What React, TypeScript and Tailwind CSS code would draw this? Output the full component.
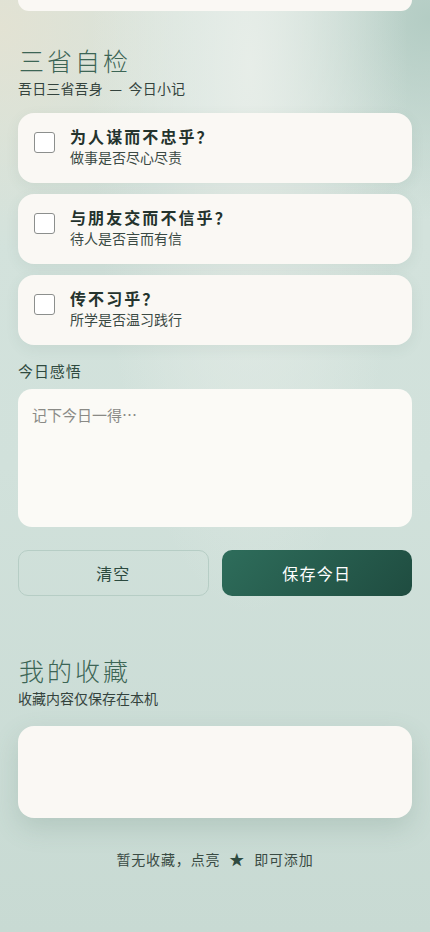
import React from 'react';

const font = { fontFamily: '"Noto Sans CJK SC", "Noto Sans", sans-serif' };

const questions = [
	{ title: '为人谋而不忠乎？', desc: '做事是否尽心尽责' },
	{ title: '与朋友交而不信乎？', desc: '待人是否言而有信' },
	{ title: '传不习乎？', desc: '所学是否温习践行' },
];

function QuestionCard({ title, desc }: { title: string; desc: string }) {
	return (
		<label className="flex items-start gap-[15px] h-[70px] rounded-2xl bg-[#faf8f4] px-4 pt-[12px] shadow-[0_4px_14px_rgba(60,100,85,0.08)]">
			<span className="mt-[7px] w-[21px] h-[21px] shrink-0 rounded-[3px] border-[1.5px] border-[#8c8f8d] bg-white" />
			<div className="flex flex-col">
				<span className="text-[16px] leading-[22px] font-bold tracking-[0.13em] text-[#24332d]">{title}</span>
				<span className="text-[14px] leading-[20px] text-[#3b4a44]">{desc}</span>
			</div>
		</label>
	);
}

export default function App() {
	return (
		<div
			style={font}
			className="min-h-[932px] w-full bg-[radial-gradient(ellipse_at_58%_7%,rgba(232,238,233,0.95),transparent_45%),radial-gradient(circle_at_0%_3%,rgba(228,226,210,0.9),transparent_22%),radial-gradient(circle_at_100%_2%,rgba(176,202,193,0.9),transparent_20%),linear-gradient(180deg,#d5e3dd_0%,#d1e1db_50%,#c8dad3_100%)] px-[18px] pb-10"
		>
			<div className="h-[11px] rounded-b-2xl bg-[#faf8f4]" />

			<section className="mt-[34px]">
				<h2 className="text-[25px] leading-[30px] font-light tracking-[0.12em] text-[#3c6555] pl-px">三省自检</h2>
				<p className="mt-[3px] text-[14px] leading-[20px] tracking-[0.01em] text-[#34433d]">吾日三省吾身 &nbsp;—&nbsp; 今日小记</p>

				<div className="mt-[15px] flex flex-col gap-[11px]">
					{questions.map((q) => (
						<QuestionCard key={q.title} title={q.title} desc={q.desc} />
					))}
				</div>

				<p className="mt-[15px] text-[15px] leading-[22px] tracking-[0.06em] text-[#2f4a40]">今日感悟</p>
				<textarea
					placeholder="记下今日一得…"
					className="mt-[7px] block w-full h-[138px] resize-none rounded-[14px] bg-[#fbfaf6] px-[14px] py-[15px] text-[15px] leading-[22px] text-[#2f3d37] placeholder:text-[#8a8a86] outline-none"
				/>

				<div className="mt-[23px] grid grid-cols-2 gap-[13px]">
					<button className="h-[46px] rounded-[10px] border border-[#b6cdc5] bg-transparent text-[16px] tracking-[0.06em] text-[#2c4a3f]">
						清空
					</button>
					<button className="h-[46px] rounded-[10px] bg-[linear-gradient(135deg,#2e6d5b,#1f4c40)] text-[16px] tracking-[0.08em] text-white">
						保存今日
					</button>
				</div>
			</section>

			<section className="mt-[59px]">
				<h2 className="text-[25px] leading-[30px] font-light tracking-[0.12em] text-[#3c6555] pl-px">我的收藏</h2>
				<p className="mt-[3px] text-[14px] leading-[20px] text-[#34433d]">收藏内容仅保存在本机</p>

				<div className="mt-[18px] h-[92px] rounded-2xl bg-[#faf8f4] shadow-[0_10px_26px_rgba(70,110,95,0.18)]" />

				<p className="mt-[31px] flex items-center justify-center text-[14px] leading-[20px] tracking-[0.06em] text-[#3a4b44]">
					<span>暂无收藏，点亮</span>
					<span className="mx-[9px] text-[15px] text-[#2f4a40]">★</span>
					<span>即可添加</span>
				</p>
			</section>
		</div>
	);
}
